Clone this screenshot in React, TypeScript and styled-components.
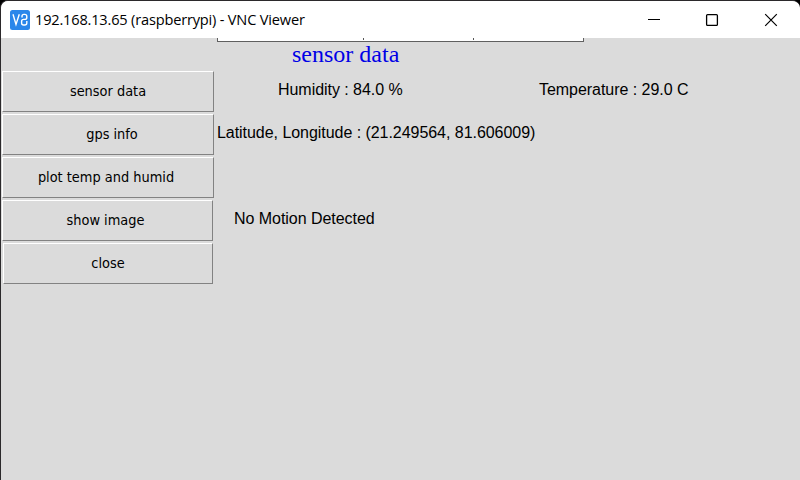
import React from "react";
import styled, { createGlobalStyle } from "styled-components";

const GlobalStyle = createGlobalStyle`
  * { box-sizing: border-box; }
  body { margin: 0; background: #000; overflow: hidden; }
`;

const Window = styled.div`
  width: 800px;
  height: 480px;
  background: #dbdbdb;
  border-top: 1px solid #2b292b;
  border-left: 1px solid #2b292b;
  border-radius: 8px 8px 0 0;
  overflow: hidden;
  display: flex;
  flex-direction: column;
`;

const TitleBar = styled.header`
  height: 37px;
  flex: none;
  background: #fff;
  display: flex;
  align-items: center;
  padding-left: 9px;
`;

const Title = styled.h1`
  margin: 0 auto 0 5px;
  padding-bottom: 2px;
  font: 400 14.6px/20px "Open Sans", sans-serif;
  letter-spacing: -0.19px;
  color: #000;
  white-space: nowrap;
`;

const Controls = styled.div`
  display: flex;
  svg { display: block; }
`;

const Screen = styled.main`
  flex: 1;
  display: flex;
  flex-direction: column;
`;

const TableEdge = styled.div`
  display: grid;
  grid-template-columns: 146px 110px 1fr;
  width: 367px;
  height: 4px;
  margin-left: 216px;
  background: #fff;
  border: solid #606060;
  border-width: 0 1px 1px;
`;

const TableCell = styled.span`
  height: 2px;
  border-right: 1px solid #555;
  &:last-child { border-right: 0; }
`;

const Heading = styled.h2`
  margin: 0 0 0 291px;
  height: 29px;
  font: 400 24px/24px "Liberation Serif", serif;
  color: #0000e6;
`;

const Row = styled.div`
  display: flex;
  height: 43px;
`;

const ButtonSlot = styled.div`
  width: 216px;
  flex: none;
`;

const TkButton = styled.button<{ $left: number; $width: number; $shift: number }>`
  display: block;
  height: 41px;
  width: ${(p) => p.$width}px;
  margin-left: ${(p) => p.$left}px;
  padding: 0 ${(p) => Math.max(0, -p.$shift)}px 1px ${(p) => Math.max(0, p.$shift)}px;
  background: #dbdbdb;
  border: 1px solid;
  border-color: #fff #828282 #828282 #fff;
  font: 400 14.4px/20px "DejaVu Sans Condensed", "DejaVu Sans", sans-serif;
  color: #000;
  white-space: nowrap;
`;

const Reading = styled.span<{ $indent: number }>`
  padding-left: ${(p) => p.$indent}px;
  font: 400 16px/38px "Liberation Sans", sans-serif;
  letter-spacing: -0.045px;
  color: #000;
  white-space: nowrap;
`;

const ReadingCell = styled.div<{ $width?: number }>`
  width: ${(p) => (p.$width ? `${p.$width}px` : "auto")};
  flex: none;
`;

type Cell = { text: string; indent: number; width?: number };
type Item = { label: string; left: number; width: number; shift: number; cells: Cell[] };

const items: Item[] = [
  {
    label: "sensor data", left: 1, width: 212, shift: 0,
    cells: [
      { text: "Humidity : 84.0 %", indent: 61, width: 322 },
      { text: "Temperature : 29.0 C", indent: 0 },
    ],
  },
  {
    label: "gps info", left: 1, width: 212, shift: 8,
    cells: [{ text: "Latitude, Longitude : (21.249564, 81.606009)", indent: 0 }],
  },
  { label: "plot temp and humid", left: 1, width: 212, shift: -4, cells: [] },
  {
    label: "show image", left: 1, width: 211, shift: -4,
    cells: [{ text: "No Motion Detected", indent: 17 }],
  },
  { label: "close", left: 2, width: 210, shift: 0, cells: [] },
];

const VncLogo = () => (
  <svg width="20" height="20" viewBox="0 0 20 20" fill="none">
    <rect width="20" height="20" rx="2.5" fill="#2b87ea" />
    <path d="M3 4.3 6 14.4 9.3 4.3" stroke="#fff" strokeWidth="1.4" />
    <path
      d="M12 7.6V6.4Q12 4.4 14 4.4H14.8Q16.8 4.4 16.8 6.4V7.4Q16.8 9.4 14.8 9.4H13.6Q11.6 9.4 11.6 11.4V13Q11.6 15 13.6 15H14.8Q16.8 15 16.8 13V11"
      stroke="#fff"
      strokeWidth="1.4"
    />
  </svg>
);

const WindowControls = () => (
  <Controls>
    <svg width="152" height="36" viewBox="0 0 152 36" fill="none" stroke="#000">
      <path d="M0 17.5H12" />
      <rect x="58.6" y="12.6" width="10.8" height="10.8" rx="1" strokeWidth="1.3" />
      <path d="M117.2 12.2 128.8 23.8M128.8 12.2 117.2 23.8" strokeWidth="1.2" />
    </svg>
  </Controls>
);

export default function App() {
  return (
    <>
      <GlobalStyle />
      <Window>
        <TitleBar>
          <VncLogo />
          <Title>192.168.13.65 (raspberrypi) - VNC Viewer</Title>
          <WindowControls />
        </TitleBar>
        <Screen>
          <TableEdge>
            <TableCell />
            <TableCell />
            <TableCell />
          </TableEdge>
          <Heading>sensor data</Heading>
          {items.map((item) => (
            <Row key={item.label}>
              <ButtonSlot>
                <TkButton $left={item.left} $width={item.width} $shift={item.shift}>
                  {item.label}
                </TkButton>
              </ButtonSlot>
              {item.cells.map((cell) => (
                <ReadingCell key={cell.text} $width={cell.width}>
                  <Reading $indent={cell.indent}>{cell.text}</Reading>
                </ReadingCell>
              ))}
            </Row>
          ))}
        </Screen>
      </Window>
    </>
  );
}
